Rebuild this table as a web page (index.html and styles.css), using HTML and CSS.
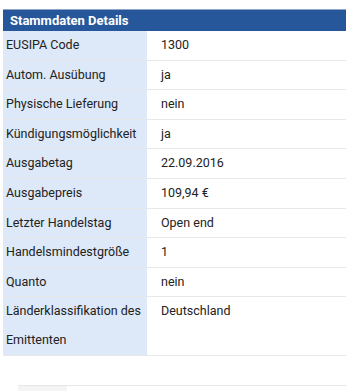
FILE: index.html
```html
<!DOCTYPE html>
<html lang="de">
<head>
<meta charset="utf-8">
<title>Stammdaten Details</title>
<link rel="stylesheet" href="styles.css">
</head>
<body>
<section class="panel">
  <h2 class="panel-title">Stammdaten Details</h2>
  <table class="details">
    <tbody>
      <tr><th>EUSIPA Code</th><td>1300</td></tr>
      <tr><th>Autom. Ausübung</th><td>ja</td></tr>
      <tr><th>Physische Lieferung</th><td>nein</td></tr>
      <tr><th>Kündigungsmöglichkeit</th><td>ja</td></tr>
      <tr><th>Ausgabetag</th><td>22.09.2016</td></tr>
      <tr><th>Ausgabepreis</th><td>109,94 €</td></tr>
      <tr><th>Letzter Handelstag</th><td>Open end</td></tr>
      <tr><th>Handelsmindestgröße</th><td>1</td></tr>
      <tr><th>Quanto</th><td>nein</td></tr>
      <tr><th>Länderklassifikation des Emittenten</th><td>Deutschland</td></tr>
    </tbody>
  </table>
</section>
<div class="tabs">
  <div class="tab"></div>
</div>
</body>
</html>
```
FILE: styles.css
```css
html, body {
  margin: 0;
  padding: 0;
  background: #fff;
}

body {
  padding: 9px 0 0 3px;
  font-family: Roboto, "Liberation Sans", Arial, sans-serif;
  font-size: 12.5px;
  color: #222;
  overflow: hidden;
}

.panel {
  width: 343px;
}

.panel-title {
  margin: 0;
  height: 21px;
  line-height: 21px;
  padding: 0 7px;
  border-top: 1px solid #8ea6c8;
  background: #27579b;
  color: #fff;
  font-size: 13px;
  font-weight: 700;
}

.details {
  width: 100%;
  border-collapse: collapse;
  table-layout: fixed;
}

.details th,
.details td {
  padding: 0;
  line-height: 28.6px;
  border-bottom: 1px solid #e8e8e8;
  text-align: left;
  vertical-align: top;
  font-weight: 400;
}

.details th {
  width: 141px;
  padding-left: 3px;
  background: #dde8f8;
}

.details td {
  padding-left: 14px;
}

.tabs {
  margin: 29px 0 0 15px;
  border-top: 1px solid #e6e6e6;
  height: 10px;
}

.tab {
  width: 49px;
  height: 10px;
  background: #f4f4f4;
}
```
